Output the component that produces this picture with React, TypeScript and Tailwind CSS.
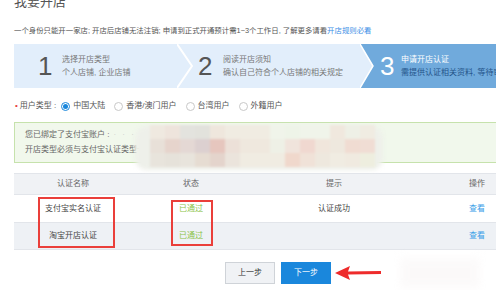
import React from "react";

const mosaic = [
  ["#efe9e0", "#eee4dc", "#e3e3de", "#e2e2dc", "#efe7dd", "#f0ece2", "#f0ece2", "#f0ece2", "#f0f4ea", "#eef4e8", "#f0f4ea", "#f0f4ea", "#f0e8de", "#eef0e6", "#f0ece2"],
  ["#e8e0d8", "#e6d4cc", "#e4d8d4", "#dcd0d0", "#e6c6be", "#ece0d8", "#efe8de", "#efe8de", "#eef0e6", "#f0e4dc", "#f0d8d0", "#f0e6dc", "#eee8de", "#f0dcd2", "#f0ddd4"],
  ["#e8e4dc", "#e6e2da", "#e8e4dc", "#e6dcd2", "#e4d4cc", "#ebe4dc", "#f0ece2", "#f0ece2", "#f0ece2", "#f0d8cc", "#f0e2d8", "#eee8de", "#f0ece2", "#f0eae0", "#eeeedf"],
];

const Radio = ({ checked, label }: { checked?: boolean; label: string }) => (
  <div className="flex items-center mr-[9px]">
    {checked ? (
      <span className="w-[9px] h-[9px] rounded-full border border-[#1a87dc] flex items-center justify-center">
        <span className="w-[5px] h-[5px] rounded-full bg-[#1a87dc]" />
      </span>
    ) : (
      <span className="w-[9px] h-[9px] rounded-full border border-[#c8c8c8] bg-white" />
    )}
    <span className="ml-[3px]">{label}</span>
  </div>
);

const App = () => {
  return (
    <div className="relative w-[496px] h-[290px] overflow-hidden bg-white font-['Liberation_Sans','Noto_Sans_CJK_SC',sans-serif] text-[#555]">
      <div className="w-[560px] pl-[14px]">
        {/* title */}
        <div className="mt-[-7px] h-[18px] leading-[18px] text-[13px] text-[#555]">我要开店</div>

        {/* notice */}
        <div className="mt-[14px] h-[12px] leading-[12px] text-[7.4px] text-[#555] whitespace-nowrap">
          一个身份只能开一家店; 开店后店铺无法注销; 申请到正式开通预计需1~3个工作日, 了解更多请看
          <span className="text-[#3a8ee6]">开店规则必看</span>
        </div>

        {/* steps */}
        <div className="mt-[7px] h-[44px] flex">
          <div className="w-[163px] bg-[#e2eefb] flex items-center pl-[24px]">
            <span className="text-[26px] leading-none text-[#555] w-[24px]">1</span>
            <div className="text-[8px] leading-[13px] text-[#777]">
              <div>选择开店类型</div>
              <div>个人店铺, 企业店铺</div>
            </div>
          </div>
          <svg width="16" height="44" viewBox="0 0 16 44" className="block">
            <rect width="16" height="44" fill="#e2eefb" />
            <polyline points="0,0 15,22 0,44" fill="none" stroke="#fff" strokeWidth="2" />
          </svg>
          <div className="w-[167px] bg-[#e2eefb] flex items-center pl-[5px]">
            <span className="text-[26px] leading-none text-[#555] w-[25px]">2</span>
            <div className="text-[8px] leading-[13px] text-[#777] whitespace-nowrap">
              <div>阅读开店须知</div>
              <div>确认自己符合个人店铺的相关规定</div>
            </div>
          </div>
          <svg width="14" height="44" viewBox="0 0 14 44" className="block">
            <rect width="14" height="44" fill="#70aadc" />
            <polygon points="0,0 13,22 0,44" fill="#e2eefb" />
            <polyline points="0,0 13,22 0,44" fill="none" stroke="#fff" strokeWidth="1.5" />
          </svg>
          <div className="flex-1 bg-[#70aadc] flex items-center pl-[6px]">
            <span className="text-[26px] leading-none text-white w-[21px]">3</span>
            <div className="text-[8px] leading-[13px] whitespace-nowrap">
              <div className="text-white">申请开店认证</div>
              <div className="text-[#24548a]">需提供认证相关资料, 等待审核</div>
            </div>
          </div>
        </div>

        {/* user type */}
        <div className="mt-[11px] h-[14px] flex items-center text-[8px] text-[#555]">
          <span className="text-[#e8403a] mr-[2px] ml-[1px]">•</span>
          <span className="mr-[5px]">用户类型 :</span>
          <Radio checked label="中国大陆" />
          <Radio label="香港/澳门用户" />
          <Radio label="台湾用户" />
          <Radio label="外籍用户" />
        </div>

        {/* green notice */}
        <div className="mt-[9px] h-[41px] border border-[#c6e2ac] bg-[#f1f8ec] pl-[10px] pt-[5px] text-[8px] leading-[14px] text-[#666]">
          <div>
            您已绑定了支付宝账户 :<span className="ml-[4px] text-[#ccc] tracking-[2px]">· · · · ·</span>
          </div>
          <div className="mt-[1px]">开店类型必须与支付宝认证类型一致</div>
        </div>

        {/* table */}
        <div className="relative mt-[10px] text-[8px]">
          <div className="grid grid-cols-[118px_118px_168px_118px] h-[22px] items-center bg-[#f0f2f5] border-y border-[#e2e5ea] text-[#666] text-center">
            <div>认证名称</div>
            <div>状态</div>
            <div>提示</div>
            <div>操作</div>
          </div>
          <div className="grid grid-cols-[118px_118px_168px_118px] h-[27px] items-center bg-white text-center text-[#444]">
            <div>支付宝实名认证</div>
            <div className="text-[#8bc34a]">已通过</div>
            <div>认证成功</div>
            <div className="text-[#3aa0e8]">查看</div>
          </div>
          <div className="grid grid-cols-[118px_118px_168px_118px] h-[28px] items-center bg-[#eef1f5] border-y border-[#e2e5ea] text-center text-[#444]">
            <div>淘宝开店认证</div>
            <div className="text-[#8bc34a]">已通过</div>
            <div />
            <div className="text-[#3aa0e8]">查看</div>
          </div>

          <div className="absolute left-[24px] top-[24px] w-[77px] h-[51px] border-2 border-[#ea3f3a]" />
          <div className="absolute left-[157px] top-[27px] w-[42px] h-[46px] border-2 border-[#ea3f3a]" />
        </div>

        {/* buttons */}
        <div className="mt-[12px] flex pl-[211px] gap-[6px] text-[8px]">
          <button className="w-[50px] h-[22px] bg-[#f0f2f5] border border-[#cfd3d8] text-[#333]">上一步</button>
          <button className="w-[50px] h-[22px] bg-[#1a87dc] text-white">下一步</button>
        </div>
      </div>

      {/* mosaic over account */}
      <div className="absolute left-[135px] top-[126px] w-[248px] h-[44px] rounded-[12px] bg-[#eef0ea] blur-[2px]" />
      <div className="absolute left-[150px] top-[125px] flex flex-col blur-[1px]">
        {mosaic.map((row, i) => (
          <div key={i} className="flex">
            {row.map((c, j) => (
              <div key={j} className="w-[15px] h-[14px]" style={{ background: c }} />
            ))}
          </div>
        ))}
      </div>

      {/* red arrow */}
      <svg className="absolute left-[333px] top-[264px]" width="50" height="18" viewBox="0 0 50 18">
        <polygon points="2,9 17,2 15,7.5 48,7 48,10 15,10.5 17,16" fill="#ee2b2b" />
      </svg>

      {/* faint watermark */}
      <div className="absolute left-[400px] top-[258px] w-[80px] h-[30px] bg-[#f8f5f5] opacity-50 blur-[4px]" />
    </div>
  );
};

export default App;
